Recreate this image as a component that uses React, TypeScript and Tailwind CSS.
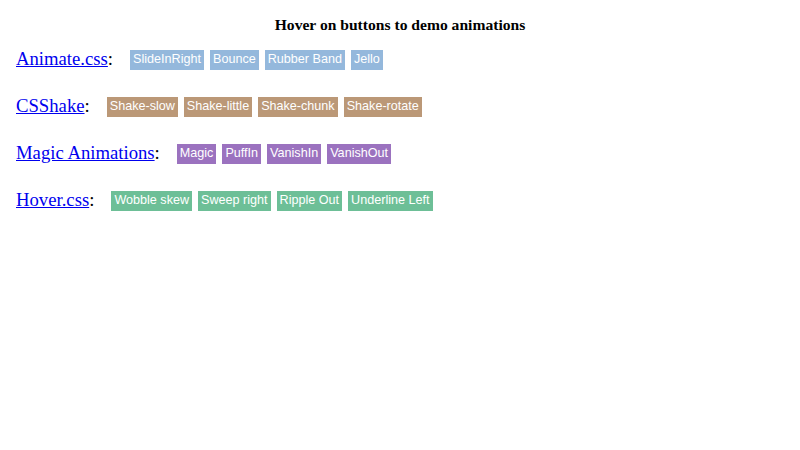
const groups = [
  {
    name: 'Animate.css',
    color: 'bg-[#94b8dc]',
    items: ['SlideInRight', 'Bounce', 'Rubber Band', 'Jello'],
  },
  {
    name: 'CSShake',
    color: 'bg-[#bb9877]',
    items: ['Shake-slow', 'Shake-little', 'Shake-chunk', 'Shake-rotate'],
  },
  {
    name: 'Magic Animations',
    color: 'bg-[#9b72bf]',
    items: ['Magic', 'PuffIn', 'VanishIn', 'VanishOut'],
  },
  {
    name: 'Hover.css',
    color: 'bg-[#6dbf97]',
    items: ['Wobble skew', 'Sweep right', 'Ripple Out', 'Underline Left'],
  },
];

export default function App() {
  return (
    <div className="w-[800px] h-[450px] bg-white font-['Liberation_Serif',serif] text-black">
      <h3 className="pt-[14px] text-center text-[15.6px] font-bold leading-[22px]">
        Hover on buttons to demo animations
      </h3>
      <div className="px-4">
        {groups.map(g => (
          <div key={g.name} className="flex h-[47px] items-center">
            <span className="mr-[17px] text-[18.7px]">
              <a href="#" className="text-[#0000ee] underline">
                {g.name}
              </a>
              :
            </span>
            <div className="flex gap-[6px]">
              {g.items.map(item => (
                <button
                  key={item}
                  className={`${g.color} flex h-[20px] items-center px-[3px] font-['Liberation_Sans',Arial,sans-serif] text-[12.6px] text-white`}
                >
                  {item}
                </button>
              ))}
            </div>
          </div>
        ))}
      </div>
    </div>
  );
}
